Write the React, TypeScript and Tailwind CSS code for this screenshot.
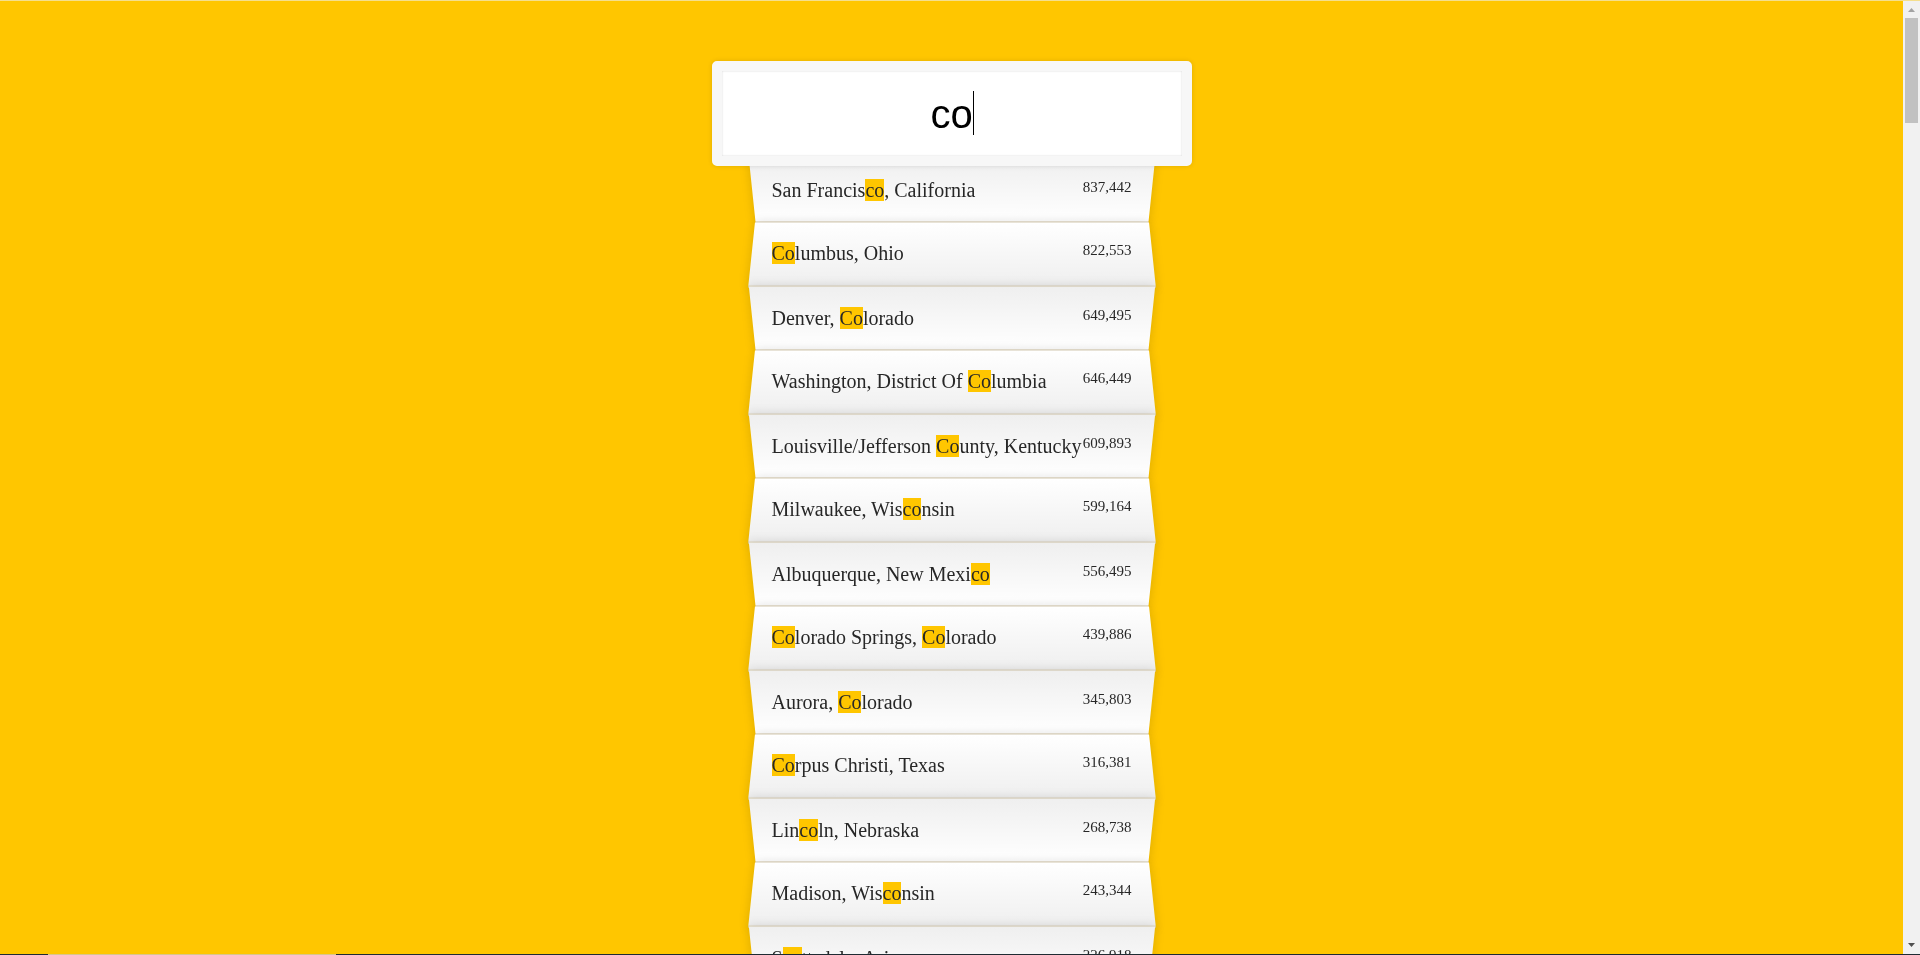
import { useState } from "react";

type Place = { city: string; state: string; population: number };

const PLACES: Place[] = [
  { city: "San Francisco", state: "California", population: 837442 },
  { city: "Columbus", state: "Ohio", population: 822553 },
  { city: "Denver", state: "Colorado", population: 649495 },
  { city: "Washington", state: "District Of Columbia", population: 646449 },
  { city: "Louisville/Jefferson County", state: "Kentucky", population: 609893 },
  { city: "Milwaukee", state: "Wisconsin", population: 599164 },
  { city: "Albuquerque", state: "New Mexico", population: 556495 },
  { city: "Colorado Springs", state: "Colorado", population: 439886 },
  { city: "Aurora", state: "Colorado", population: 345803 },
  { city: "Corpus Christi", state: "Texas", population: 316381 },
  { city: "Lincoln", state: "Nebraska", population: 268738 },
  { city: "Madison", state: "Wisconsin", population: 243344 },
  { city: "Scottsdale", state: "Arizona", population: 226918 },
];

function Highlighted({ text, query }: { text: string; query: string }) {
  if (!query) return <>{text}</>;
  const escaped = query.replace(/[.*+?^${}()|[\]\\]/g, "\\$&");
  const parts = text.split(new RegExp(`(${escaped})`, "gi"));
  return (
    <>
      {parts.map((part, i) =>
        i % 2 === 1 ? (
          <mark key={i} className="bg-[#ffc600] text-inherit">
            {part}
          </mark>
        ) : (
          part
        ),
      )}
    </>
  );
}

// A strip of folded paper; alternating strips lean in opposite directions.
function Row({ place, query }: { place: Place; query: string }) {
  return (
    <li className="group relative isolate flex justify-between border-b border-transparent px-5 odd:pt-[23px] odd:pb-[17px] even:pt-[22px] even:pb-[18px]">
      <span
        aria-hidden="true"
        className="absolute inset-x-0 top-0 -bottom-0.5 -z-10 border-b-2 border-[#ddd3b8] shadow-[0_0_10px_rgba(0,0,0,0.14)] group-odd:[transform:perspective(100px)_rotateX(-3deg)_translateY(3px)] group-odd:bg-[linear-gradient(to_top,#ffffff_0%,#efefef_100%)] group-even:[transform:perspective(100px)_rotateX(3deg)_translateY(2px)_scale(1.001)] group-even:bg-[linear-gradient(to_bottom,#ffffff_0%,#efefef_100%)]"
      />
      <span className="whitespace-nowrap">
        <Highlighted text={`${place.city}, ${place.state}`} query={query} />
      </span>
      <span className="text-[15px] leading-4">{place.population.toLocaleString("en-US")}</span>
    </li>
  );
}

function ScrollBar() {
  return (
    <div aria-hidden="true" className="flex w-[17px] shrink-0 flex-col items-center bg-[#f1f1f1]">
      <svg width="17" height="17" viewBox="0 0 17 17" className="shrink-0">
        <path d="M5 11 8.5 7 12 11z" fill="#a3a3a3" />
      </svg>
      <div className="h-[105px] w-[13px] bg-[#c1c1c1]" />
      <svg width="17" height="17" viewBox="0 0 17 17" className="mt-auto shrink-0">
        <path d="M5 6 8.5 10 12 6z" fill="#505050" />
      </svg>
    </div>
  );
}

export default function App() {
  const [query, setQuery] = useState("co");
  const matches = PLACES.filter((p) =>
    `${p.city}, ${p.state}`.toLowerCase().includes(query.toLowerCase()),
  );

  return (
    <div className="flex h-screen flex-col overflow-hidden bg-[#ffc600]">
      <div className="h-px shrink-0 bg-[#f5df8e]" />
      <div className="flex min-h-0 flex-1">
        <main className="min-w-0 flex-1 overflow-hidden font-['Liberation_Serif',serif] text-[20px] leading-[23px] text-[#272727]">
          <form className="mx-auto mt-[50px] w-full max-w-[400px]" onSubmit={(e) => e.preventDefault()}>
            <div className="relative top-2.5 z-10 -mx-10">
              <input
                type="text"
                aria-label="City or State"
                placeholder="City or State"
                value={query}
                onChange={(e) => setQuery(e.target.value)}
                className="block w-full rounded-[5px] border-10 border-[#f7f7f7] bg-white px-5 pt-[21px] pb-[19px] text-center font-['Liberation_Sans',sans-serif] text-[40px] leading-[45px] text-black caret-transparent shadow-[0_0_5px_rgba(0,0,0,0.12),inset_0_0_2px_rgba(0,0,0,0.19)] outline-none"
              />
              <div
                aria-hidden="true"
                className="pointer-events-none absolute inset-0 flex items-center justify-center pb-0.5 font-['Liberation_Sans',sans-serif] text-[40px]"
              >
                <span className="relative">
                  <span className="invisible">{query}</span>
                  <span className="absolute top-1/2 left-full h-11 w-px -translate-y-1/2 bg-black" />
                </span>
              </div>
            </div>
            <ul>
              {matches.map((p) => (
                <Row key={p.city} place={p} query={query} />
              ))}
            </ul>
          </form>
        </main>
        <ScrollBar />
      </div>
      <div className="flex h-px shrink-0 bg-[#1f2b33]">
        <div className="ml-[48px] w-[288px] bg-[#d9c68a]" />
      </div>
    </div>
  );
}
